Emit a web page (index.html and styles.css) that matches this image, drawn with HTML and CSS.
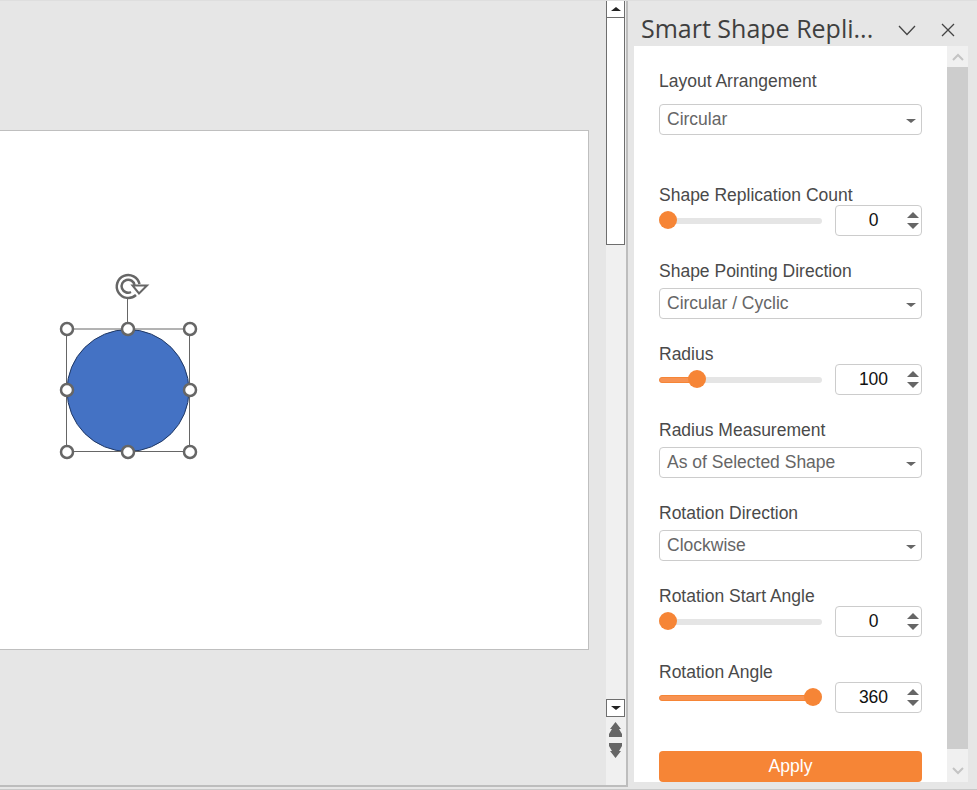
FILE: index.html
```html
<!DOCTYPE html>
<html lang="en">
<head>
<meta charset="utf-8">
<title>Smart Shape Replicator</title>
<link rel="stylesheet" href="styles.css">
</head>
<body>
<div class="app">
  <main class="workspace">
    <div class="slide-area">
      <section class="slide">
        <svg class="selection" width="160" height="210" viewBox="0 0 160 210">
          <circle class="shape" cx="78" cy="130.500" r="61"/>
          <path class="sel-line" d="M77.500 38V69M16.500 69H139.500V191.500H16.500Z"/>
          <path class="rot-arc" d="M89.500 24A11.500 11.500 0 1 0 86 35"/>
          <path class="rot-arc" d="M84.500 25A6.500 6.500 0 1 0 81 32"/>
          <path class="rot-head" d="M82.500 25.500H97L89 33.500Z"/>
          <g class="handle">
            <circle cx="17" cy="69" r="6"/><circle cx="78" cy="69" r="6"/><circle cx="140" cy="69" r="6"/>
            <circle cx="17" cy="130" r="6"/><circle cx="140" cy="130" r="6"/>
            <circle cx="17" cy="192" r="6"/><circle cx="78" cy="192" r="6"/><circle cx="140" cy="192" r="6"/>
          </g>
        </svg>
      </section>
    </div>
    <aside class="vscroll">
      <button class="vbtn top"><span class="tri-up"></span></button>
      <div class="vtrack"><div class="vthumb"></div></div>
      <button class="vbtn"><span class="tri-down"></span></button>
      <svg class="pagejump" width="13" height="36" viewBox="0 0 13 36">
        <path d="M6.500 0L12 7H10L13 12V15H0V12L3 7H1Z"/>
        <path d="M0 21H13V24L10 29H12L6.500 36L1 29H3L0 24Z"/>
      </svg>
    </aside>
  </main>
  <aside class="pane">
    <header class="pane-head">
      <h1 class="pane-title">Smart Shape Repli...</h1>
      <svg class="pane-icon chev" width="18" height="11" viewBox="0 0 18 11"><path d="M1 1L9 9.500L17 1"/></svg>
      <svg class="pane-icon close" width="14" height="14" viewBox="0 0 14 14"><path d="M1 1L13 13M13 1L1 13"/></svg>
    </header>
    <div class="pane-body">
      <form class="form">
        <div class="field first">
          <label class="label sel-gap-lg">Layout Arrangement</label>
          <div class="select">Circular<span class="caret"></span></div>
        </div>
        <div class="field">
          <label class="label">Shape Replication Count</label>
          <div class="slider-row">
            <div class="slider"><div class="fill"></div><div class="thumb" style="left:0px"></div></div>
            <div class="number"><span class="num">0</span><span class="spin"><i class="up"></i><i class="down"></i></span></div>
          </div>
        </div>
        <div class="field">
          <label class="label sel-gap">Shape Pointing Direction</label>
          <div class="select">Circular / Cyclic<span class="caret"></span></div>
        </div>
        <div class="field">
          <label class="label">Radius</label>
          <div class="slider-row">
            <div class="slider"><div class="fill" style="width:38px"></div><div class="thumb" style="left:29px"></div></div>
            <div class="number"><span class="num">100</span><span class="spin"><i class="up"></i><i class="down"></i></span></div>
          </div>
        </div>
        <div class="field">
          <label class="label sel-gap">Radius Measurement</label>
          <div class="select">As of Selected Shape<span class="caret"></span></div>
        </div>
        <div class="field">
          <label class="label sel-gap">Rotation Direction</label>
          <div class="select">Clockwise<span class="caret"></span></div>
        </div>
        <div class="field">
          <label class="label">Rotation Start Angle</label>
          <div class="slider-row">
            <div class="slider"><div class="fill"></div><div class="thumb" style="left:0px"></div></div>
            <div class="number"><span class="num">0</span><span class="spin"><i class="up"></i><i class="down"></i></span></div>
          </div>
        </div>
        <div class="field">
          <label class="label">Rotation Angle</label>
          <div class="slider-row">
            <div class="slider"><div class="fill" style="width:154px"></div><div class="thumb" style="left:145px"></div></div>
            <div class="number"><span class="num">360</span><span class="spin"><i class="up"></i><i class="down"></i></span></div>
          </div>
        </div>
        <button type="button" class="apply">Apply</button>
      </form>
      <div class="pscroll">
        <div class="pscroll-btn"><svg width="14" height="8" viewBox="0 0 14 8"><path d="M2 7L7 2L12 7"/></svg></div>
        <div class="pscroll-thumb"></div>
        <div class="pscroll-btn bottom"><svg width="14" height="8" viewBox="0 0 14 8"><path d="M2 1L7 6L12 1"/></svg></div>
      </div>
    </div>
  </aside>
</div>
</body>
</html>
```
FILE: styles.css
```css
* { box-sizing: border-box; }
html, body { margin: 0; padding: 0; height: 100%; overflow: hidden; }
body { background: #e6e6e6; font-family: "Liberation Sans", Arial, sans-serif; }

.app {
  display: flex;
  align-items: flex-start;
  width: 977px;
  height: 790px;
  border-top: 1px solid #dedede;
  border-bottom: 1px solid #c8c8c8;
}

.workspace {
  display: flex;
  width: 628px;
  height: 786px;
  border-right: 2px solid #bdbdbd;
  border-bottom: 2px solid #bdbdbd;
}

.slide-area { width: 606px; padding-top: 129px; flex: none; }
.slide {
  position: relative;
  width: 589px;
  height: 520px;
  background: #fff;
  border: 1px solid #bfbfbf;
  border-left: 0;
}
.selection { position: absolute; left: 50px; top: 129px; }
.shape { fill: #4472c4; stroke: #203864; stroke-width: 1; }
.sel-line { fill: none; stroke: #666; stroke-width: 1; }
.rot-arc { fill: none; stroke: #666; stroke-width: 2.500; }
.rot-head { fill: #fff; stroke: #666; stroke-width: 2; }
.handle circle { fill: #fff; stroke: #666; stroke-width: 2.500; }

.vscroll {
  width: 20px;
  flex: none;
  background: #f0f0f0;
  display: flex;
  flex-direction: column;
  align-items: flex-start;
}
.vbtn {
  width: 19px;
  height: 18px;
  padding: 0;
  background: #fff;
  border: 1px solid #6e6e6e;
  display: flex;
  align-items: center;
  justify-content: center;
  flex: none;
}
.vbtn.top { height: 17px; border-top: 0; }
.vtrack { height: 681px; width: 19px; flex: none; }
.vthumb { height: 227px; background: #fff; border: 1px solid #6e6e6e; border-top: 0; }
.tri-up { border: 5px solid transparent; border-top: 0; border-bottom: 4px solid #222; width: 0; height: 0; }
.tri-down { border: 5px solid transparent; border-bottom: 0; border-top: 4px solid #222; width: 0; height: 0; }
.pagejump { margin: 5px 0 0 3px; fill: #666; flex: none; }

.pane { width: 349px; flex: none; padding-left: 6px; height: 788px; }
.pane-head {
  height: 45px;
  padding: 9px 0 0 7px;
  display: flex;
  align-items: center;
}
.pane-title {
  margin: 0;
  font: 400 25px "Open Sans", "Noto Sans", sans-serif;
  color: #3f3f3f;
  width: 257px;
  white-space: nowrap;
}
.pane-icon { fill: none; stroke: #444; stroke-width: 1.300; flex: none; margin-top: 4px; }
.close { margin-left: 25px; }

.pane-body { display: flex; height: 736px; }
.form {
  width: 313px;
  background: #fff;
  padding: 25px 25px 0;
  display: flex;
  flex-direction: column;
}
.field { margin-bottom: 25px; }
.field.first { margin-bottom: 50px; }
.label {
  display: block;
  font-size: 17.500px;
  line-height: 20px;
  color: #4a4a4a;
}
.sel-gap { margin-bottom: 7px; }
.sel-gap-lg { margin-bottom: 13px; }

.select {
  position: relative;
  height: 31px;
  width: 263px;
  border: 1px solid #ccc;
  border-radius: 4px;
  padding-left: 7px;
  font-size: 17.500px;
  line-height: 28px;
  color: #666;
  background: #fff;
}
.caret {
  position: absolute;
  right: 5px;
  top: 14px;
  border: 5px solid transparent;
  border-bottom: 0;
  border-top: 4px solid #666;
}

.slider-row { display: flex; align-items: center; justify-content: space-between; height: 31px; width: 263px; }
.slider { position: relative; width: 163px; height: 6px; background: #e5e5e5; border-radius: 3px; }
.fill { height: 6px; width: 0; background: #f79252; border-radius: 3px; }
.fill[style] { border: 1px solid #f68536; }
.thumb {
  position: absolute;
  top: -7px;
  width: 18px;
  height: 18px;
  border-radius: 50%;
  background: #f68536;
}
.number {
  position: relative;
  width: 87px;
  height: 31px;
  border: 1px solid #ccc;
  border-radius: 4px;
  background: #fff;
}
.num {
  position: absolute;
  left: 0;
  width: 75px;
  text-align: center;
  font-size: 17.500px;
  line-height: 29px;
  color: #111;
}
.spin {
  position: absolute;
  right: 2px;
  top: 6px;
  display: flex;
  flex-direction: column;
  gap: 5px;
}
.spin i { display: block; width: 0; height: 0; border: 6px solid transparent; }
.spin .up { border-top: 0; border-bottom: 6px solid #666; }
.spin .down { border-bottom: 0; border-top: 6px solid #666; }

.apply {
  margin-top: 13px;
  width: 263px;
  height: 31px;
  border: 0;
  border-radius: 4px;
  background: #f68536;
  color: #fff;
  font: 17.500px "Liberation Sans", Arial, sans-serif;
  padding: 0;
}

.pscroll { width: 21px; display: flex; flex-direction: column; background: #f0f0f0; height: 736px; }
.pscroll-btn { height: 21px; display: flex; align-items: center; justify-content: center; flex: none; }
.pscroll-btn.bottom { height: 33px; align-items: flex-end; padding-bottom: 7px; }
.pscroll-btn svg { fill: none; stroke: #c4c4c4; stroke-width: 2; }
.pscroll-thumb { flex: 1; background: #cdcdcd; }
```
